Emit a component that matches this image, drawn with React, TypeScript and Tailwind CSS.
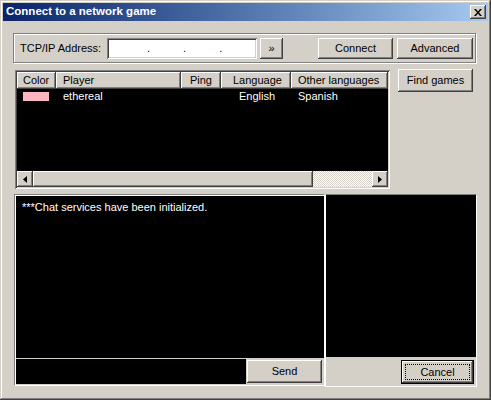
import React from 'react';

const FONT = { fontFamily: '"Liberation Sans", Arial, sans-serif' };

// classic win9x bevels
const RAISED =
  'bg-[#d4d0c8] shadow-[inset_-1px_-1px_#404040,inset_1px_1px_#ffffff,inset_-2px_-2px_#808080,inset_2px_2px_#d4d0c8]';
const SUNKEN =
  'shadow-[inset_1px_1px_#808080,inset_-1px_-1px_#ffffff,inset_2px_2px_#404040,inset_-2px_-2px_#d4d0c8]';

function Button({ label, className = '' }: { label: string; className?: string }) {
  return (
    <button className={`${RAISED} flex items-center justify-center text-[11px] text-black ${className}`}>
      {label}
    </button>
  );
}

function HeaderCell({ label, className = '' }: { label: string; className?: string }) {
  return (
    <div
      className={`h-[17px] flex items-center bg-[#d4d0c8] shadow-[inset_-1px_-1px_#404040,inset_1px_1px_#ffffff,inset_-2px_-2px_#808080] text-[11px] text-black ${className}`}
    >
      {label}
    </div>
  );
}

function Arrow({ dir }: { dir: 'left' | 'right' }) {
  return (
    <div className={`${RAISED} w-[16px] h-[16px] flex items-center justify-center`}>
      <svg width="4" height="7" viewBox="0 0 4 7">
        {dir === 'left' ? <path d="M4 0V7L0 3.5Z" fill="#000" /> : <path d="M0 0V7L4 3.5Z" fill="#000" />}
      </svg>
    </div>
  );
}

export default function App() {
  return (
    <div
      style={FONT}
      className="w-[491px] h-[400px] bg-[#d4d0c8] p-[3px] shadow-[inset_-1px_-1px_#404040,inset_1px_1px_#d4d0c8,inset_-2px_-2px_#808080,inset_2px_2px_#ffffff] overflow-hidden"
    >
      {/* title bar */}
      <div className="h-[18px] flex items-center justify-between pl-[3px] pr-[2px] bg-gradient-to-r from-[#0a246a] to-[#a6caf0]">
        <span className="text-[11.5px] font-bold text-white leading-none">Connect to a network game</span>
        <div className={`${RAISED} w-[16px] h-[14px] flex items-center justify-center`}>
          <svg width="8" height="7" viewBox="0 0 8 7">
            <path d="M0 0h2l2 2.5L6 0h2L5 3.5 8 7H6L4 4.5 2 7H0l3-3.5Z" fill="#000" />
          </svg>
        </div>
      </div>

      <div className="pl-[10px]">
        {/* address group */}
        <div className="mt-[12px] w-[463px] h-[30px] border border-[#808080] shadow-[1px_1px_0_#ffffff,inset_1px_1px_0_#ffffff] flex items-center pl-[6px]">
          <span className="w-[87px] text-[11px] text-black">TCP/IP Address:</span>
          <div className={`${SUNKEN} bg-white w-[150px] h-[21px] flex items-center pl-[2px] text-[11px] text-black`}>
            <span className="w-[38px]" />
            <span>.</span>
            <span className="w-[33px]" />
            <span>.</span>
            <span className="w-[33px]" />
            <span>.</span>
          </div>
          <Button label="»" className="ml-[3px] w-[23px] h-[21px]" />
          <Button label="Connect" className="ml-[35px] w-[75px] h-[21px]" />
          <Button label="Advanced" className="ml-[4px] w-[76px] h-[21px]" />
        </div>

        {/* player list row */}
        <div className="mt-[6px] flex items-start">
          <div className={`${SUNKEN} ml-[2px] mt-[1px] w-[375px] h-[119px] bg-black p-[2px] flex flex-col`}>
            <div className="flex">
              <HeaderCell label="Color" className="w-[39px] pl-[6px]" />
              <HeaderCell label="Player" className="w-[125px] pl-[7px]" />
              <HeaderCell label="Ping" className="w-[40px] justify-end pr-[9px]" />
              <HeaderCell label="Language" className="w-[70px] pl-[12px]" />
              <HeaderCell label="Other languages" className="flex-1 pl-[7px]" />
            </div>
            <div className="h-[14px] flex items-center text-[11px] text-white">
              <div className="w-[39px] pl-[6px]">
                <div className="w-[26px] h-[9px] bg-[#ffb6c1]" />
              </div>
              <span className="w-[125px] pl-[7px]">ethereal</span>
              <span className="w-[40px]" />
              <span className="w-[70px] pl-[18px]">English</span>
              <span className="pl-[7px]">Spanish</span>
            </div>
            <div className="flex-1" />
            <div className="flex h-[16px]">
              <Arrow dir="left" />
              <div className={`${RAISED} w-[280px] h-[16px]`} />
              <div className="flex-1 h-[16px] bg-[image:repeating-conic-gradient(#ffffff_0%_25%,#d4d0c8_0%_50%)] bg-[length:2px_2px]" />
              <Arrow dir="right" />
            </div>
          </div>
          <Button label="Find games" className="ml-[8px] w-[75px] h-[23px]" />
        </div>

        {/* chat + side panel */}
        <div className="mt-[5px] flex">
          <div className="ml-[1px] w-[311px] h-[192px] border border-t-[#808080] border-l-[#808080] border-r-white border-b-white shadow-[inset_1px_1px_0_#ffffff] flex flex-col">
            <div className="h-[162px] ml-[1px] mt-[1px] bg-black pl-[6px] pt-[3px] text-[11px] text-white">
              ***Chat services have been initialized.
            </div>
            <div className="h-[1px] ml-[1px] bg-[#d4d0c8]" />
            <div className="flex items-start ml-[1px]">
              <div className="w-[230px] h-[25px] bg-black" />
              <Button label="Send" className="ml-[1px] mt-[1px] w-[75px] h-[23px]" />
            </div>
          </div>
          <div className="w-[152px] h-[193px] border border-t-[#808080] border-l-white border-r-white border-b-white flex flex-col">
            <div className="h-[162px] bg-black" />
            <div className="flex justify-end pr-[2px] pt-[3px]">
              <div className="w-[73px] h-[24px] border border-black">
                <div className={`${RAISED} w-full h-full p-[3px]`}>
                  <div className="w-full h-full border border-dotted border-black flex items-center justify-center text-[11px] text-black">
                    Cancel
                  </div>
                </div>
              </div>
            </div>
          </div>
        </div>
      </div>
    </div>
  );
}
